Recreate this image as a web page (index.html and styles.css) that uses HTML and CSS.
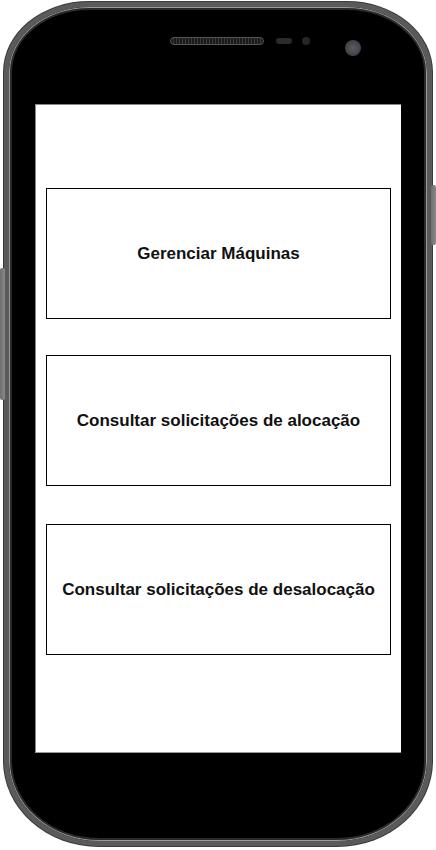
FILE: index.html
```html
<!DOCTYPE html>
<html lang="pt">
<head>
    <meta charset="UTF-8">
    <meta name="viewport" content="width=device-width, initial-scale=1.0">
    <title>Menu</title>
    <link rel="stylesheet" href="styles.css">
</head>
<body>
    <div class="phone">
        <div class="side-btn side-left"></div>
        <div class="side-btn side-right"></div>
        <div class="phone-top">
            <div class="speaker"></div>
            <div class="sensor-pill"></div>
            <div class="sensor-dot"></div>
            <div class="camera"></div>
        </div>
        <div class="screen">
            <div class="menu">
                <a class="menu-item" href="#">Gerenciar Máquinas</a>
                <a class="menu-item" href="#">Consultar solicitações de alocação</a>
                <a class="menu-item" href="#">Consultar solicitações de desalocação</a>
            </div>
        </div>
    </div>
</body>
</html>
```

FILE: styles.css
```css
body {
    margin: 0;
    width: 436px;
    height: 850px;
    background: #fff;
    font-family: "Liberation Sans", Arial, sans-serif;
    overflow: hidden;
}

.phone {
    position: relative;
    box-sizing: border-box;
    width: 428px;
    height: 844px;
    margin: 2px 4px;
    background: #000;
    border: 5px solid #5a5a5a;
    border-radius: 85px 85px 95px 95px / 70px 70px 85px 85px;
    box-shadow: inset 0 0 0 1px #9a9a9a, inset 0 0 0 3px #2a2a2a, 0 0 0 1px #3a3a3a;
    display: flex;
    flex-direction: column;
}

.side-btn {
    position: absolute;
    width: 5px;
    background: linear-gradient(90deg, #6e6e6e, #8a8a8a);
    border-radius: 2px;
}
.side-left {
    left: -9px;
    top: 261px;
    height: 132px;
}
.side-right {
    right: -9px;
    top: 178px;
    height: 60px;
}

.phone-top {
    height: 97px;
    display: flex;
    align-items: flex-start;
    padding-left: 161px;
    box-sizing: border-box;
    padding-top: 30px;
}
.speaker {
    width: 92px;
    height: 6px;
    border: 1px solid #555;
    border-radius: 4px;
    background: repeating-linear-gradient(90deg, #1a1a1a 0, #1a1a1a 2px, #3a3a3a 2px, #3a3a3a 3px);
}
.sensor-pill {
    width: 16px;
    height: 6px;
    margin: 1px 0 0 12px;
    border-radius: 3px;
    background: #2b2b2b;
}
.sensor-dot {
    width: 8px;
    height: 8px;
    margin: 0 0 0 10px;
    border-radius: 50%;
    background: #262626;
}
.camera {
    width: 16px;
    height: 16px;
    margin: 3px 0 0 35px;
    border-radius: 50%;
    background: radial-gradient(circle, #5a5d62 0, #4a4d52 40%, #34363a 100%);
}

.screen {
    margin: 0 26px;
    height: 649px;
    box-sizing: border-box;
    background: #fff;
    border-top: 1px solid #888;
    border-left: 1px solid #888;
    border-bottom: 1px solid #999;
    padding: 83px 10px 0 10px;
}

.menu {
    display: flex;
    flex-direction: column;
    gap: 36px;
}
.menu-item {
    height: 131px;
    box-sizing: border-box;
    border: 1px solid #000;
    display: flex;
    align-items: center;
    justify-content: center;
    color: #111;
    font-size: 17px;
    font-weight: bold;
    text-decoration: none;
}
.menu-item:last-child {
    margin-top: 2px;
}
```
